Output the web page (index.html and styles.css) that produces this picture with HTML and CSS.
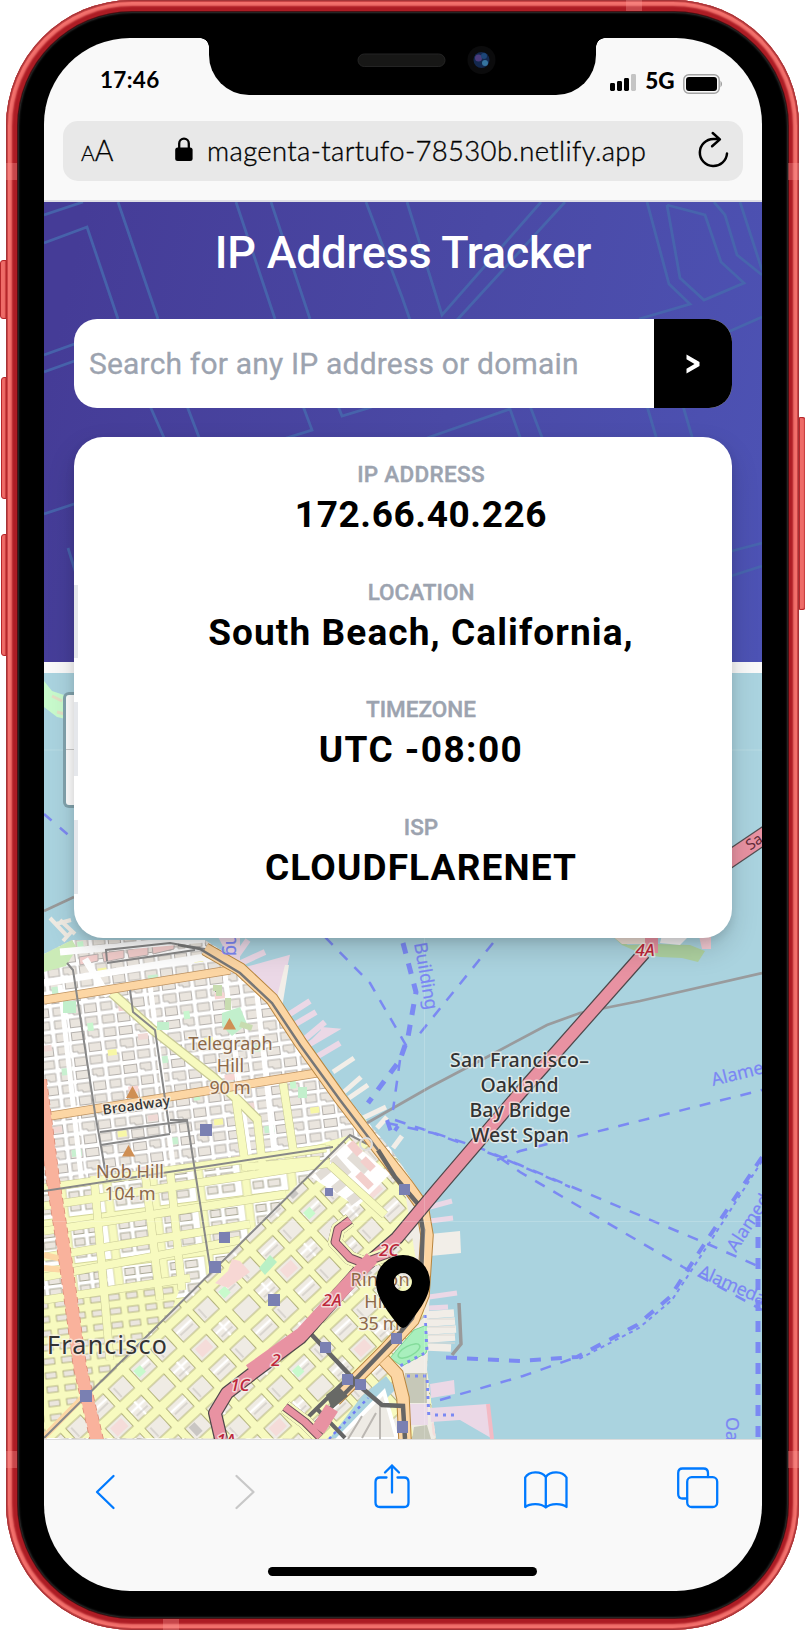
FILE: index.html
```html
<!DOCTYPE html>
<html lang="en">
<head>
<meta charset="utf-8">
<title>IP Address Tracker</title>
<link rel="stylesheet" href="styles.css">
</head>
<body>
<div class="phone">
  <i class="key mute"></i><i class="key vol-up"></i><i class="key vol-down"></i><i class="key power"></i>
  <i class="band band-t"></i><i class="band band-b"></i><i class="band band-l1"></i><i class="band band-l2"></i><i class="band band-r1"></i><i class="band band-r2"></i>
  <div class="bezel">
    <div class="screen">
      <div class="status">
        <span class="time">17:46</span>
        <span class="signal">
          <svg width="26" height="17" viewBox="0 0 26 17"><rect x="0" y="9" width="5" height="8" rx="1.4"/><rect x="7" y="7" width="5" height="10" rx="1.4"/><rect x="14" y="4" width="5" height="13" rx="1.4"/><rect x="21" y="0" width="5" height="17" rx="1.4" fill="#c4c4c4"/></svg>
          <b>5G</b>
          <svg class="battery" width="40" height="20" viewBox="0 0 40 20"><rect x=".8" y=".8" width="35.4" height="18.4" rx="5" fill="none" stroke="#a3a3a3" stroke-width="1.5"/><rect x="3" y="3" width="31" height="14" rx="3"/><path d="M37.5 6.5 Q40.5 10 37.5 13.5z" fill="#999"/></svg>
        </span>
        <div class="notch">
          <svg width="387" height="57" viewBox="209 38 387 57">
            <rect x="358" y="54" width="87" height="12.5" rx="6.2" fill="#171716" stroke="#242424"/>
            <circle cx="481.500" cy="60" r="14" fill="#0b0b0c"/><circle cx="481.500" cy="60" r="8" fill="#13284e"/>
            <circle cx="478.500" cy="58" r="3.500" fill="#4b3c7c"/><circle cx="485" cy="63" r="3" fill="#35749f"/><circle cx="484" cy="56" r="3" fill="#1d4678"/>
          </svg>
        </div>
      </div>
      <div class="address">
        <span class="aa"><small>A</small>A</span>
        <svg class="lock" width="18" height="25" viewBox="0 0 18 25"><path d="M4.200 12V6.500a4.800 4.800 0 0 1 9.600 0V12" fill="none" stroke="#000" stroke-width="2.300"/><rect x=".2" y="10.500" width="17.400" height="13.500" rx="2.500"/></svg>
        <span class="url">magenta-tartufo-78530b.netlify.app</span>
        <svg class="reload" width="32" height="38" viewBox="697 130 32 38" fill="none" stroke="#000" stroke-width="2.500" stroke-linecap="round" stroke-linejoin="round"><path d="M727 152.500a13.600 13.600 0 1 1-13.600-14.600h5.500M712.700 132l7.200 6.400-7.800 6.900"/></svg>
      </div>
      <div class="header">
        <svg class="lines" width="718" height="460" viewBox="44 202 718 460" fill="none" stroke="#4669ad" stroke-opacity=".85" stroke-width="2.800">
          <path d="M44 215 83 202M44 243 87 227 118 319M118 202 158 319M236 202 275 319M271 202 310 319M366 202 402 297 410 320M407 202 442 315 541 202M565 202 457 320M647 202 669 284 690 304 639 319M667 205 705 215 721 262 744 283 704 300 680 278 667 205M714 202 725 215 737 255 762 275M740 202 762 270M728 332 762 317M44 355 80 342M44 372 80 359M150 406 165 440M187 406 200 440M303 406 312 430 280 440M338 406 342 416 372 407M427 438 510 409 521 440M530 406 543 440M647 406 657 440M683 406 693 440M44 514 80 502M68 548 78 580M728 552 762 543M728 577 762 566"/>
        </svg>
        <h1>IP Address Tracker</h1>
        <div class="search"><span class="field">Search for any IP address or domain</span><span class="go"><svg width="14" height="20" viewBox="0 0 14 20"><path d="M.5.500 13.500 8v4L.5 19.500v-4.800L8.500 10 .5 5.300z" fill="#fff"/></svg></span></div>
        <div class="card">
          <div class="row first"><small class="wide">IP ADDRESS</small><strong class="v1">172.66.40.226</strong></div>
          <div class="row"><small>LOCATION</small><strong class="v2">South Beach, California,</strong></div>
          <div class="row"><small>TIMEZONE</small><strong class="v3">UTC -08:00</strong></div>
          <div class="row"><small>ISP</small><strong class="v4">CLOUDFLARENET</strong></div>
        </div>
      </div>
      <div class="map">
        <svg width="718" height="766" viewBox="44 673 718 766">
          <defs>
            <pattern id="north" width="48" height="39" patternUnits="userSpaceOnUse" patternTransform="translate(44 955) rotate(-7)">
              <rect width="48" height="39" fill="#fff"/>
              <g fill="#eae5de" stroke="#b5b1ad" stroke-width="1"><rect x="2" y="2" width="12" height="8.500"/><rect x="17.500" y="2.500" width="13" height="8"/><path d="M34 2h11v8h-7v-2h-4z"/><rect x="2" y="15" width="11" height="8"/><path d="M17 15h13v9h-8v-2h-5z"/><rect x="33.500" y="15" width="12" height="8.500"/><path d="M2 28h12v8H2z"/><rect x="17.500" y="28" width="12" height="8.500"/><rect x="33" y="28" width="12" height="8"/></g>
            </pattern>
            <pattern id="south" width="46" height="47" patternUnits="userSpaceOnUse" patternTransform="translate(54 1170) rotate(-7)">
              <rect width="46" height="47" fill="#fff"/>
              <path d="M0 5.500H46M5 0V47" stroke="#c9cb8d" stroke-width="9"/><path d="M0 5.500H46M5 0V47" stroke="#f7fabf" stroke-width="7.500"/>
              <g fill="#ebe6df" stroke="#aaa896" stroke-width="1"><rect x="12" y="12.500" width="10" height="7"/><rect x="27" y="12.500" width="12" height="7"/><rect x="12" y="24" width="10" height="7"/><rect x="27" y="24" width="12" height="7"/><rect x="12" y="36" width="10" height="7"/><rect x="27" y="36" width="12" height="7"/></g>
            </pattern>
            <pattern id="west" width="18" height="14" patternUnits="userSpaceOnUse" patternTransform="translate(50 1298) rotate(-7)">
              <rect width="18" height="14" fill="#f7fabf"/><rect x="4" y="4" width="11" height="6" fill="#ebe6df" stroke="#aead7c" stroke-width=".9"/>
            </pattern>
            <pattern id="soma" width="58" height="54" patternUnits="userSpaceOnUse" patternTransform="translate(250 1250) rotate(-43)">
              <rect width="58" height="54" fill="#f7fabf"/>
              <g fill="#efebe4" stroke="#b3b37c"><rect x="4.500" y="5" width="22" height="17"/><rect x="33.500" y="5" width="20" height="17"/><rect x="4.500" y="32" width="22" height="17"/><rect x="33.500" y="32" width="20" height="17"/></g>
              <path d="M5 11H26M44 32V49M34 38H53" stroke="#fff" stroke-width="2.500"/>
              <path d="M7 15H24M36 44H51M38 8V20" stroke="#c4bfbb" stroke-width="1"/>
            </pattern>
            <pattern id="accentN" width="97" height="82" patternUnits="userSpaceOnUse" patternTransform="translate(44 960) rotate(-7)">
              <rect x="4" y="28" width="10" height="7" fill="#c8f0d0"/><rect x="52" y="15" width="9" height="6" fill="#f7f7a6"/><rect x="68" y="54" width="10" height="6" fill="#f6d5d2"/><rect x="35" y="68" width="6" height="8" fill="#c8f7cf"/><rect x="84" y="3" width="10" height="6" fill="#f0d9d5"/>
            </pattern>
            <pattern id="accentS" width="116" height="108" patternUnits="userSpaceOnUse" patternTransform="translate(250 1250) rotate(-43)">
              <rect x="8" y="35" width="15" height="11" fill="#f5dcd9"/><rect x="64" y="9" width="9" height="9" fill="#c8facc"/><rect x="36" y="88" width="8" height="8" fill="#f6f8a4"/><rect x="66" y="88" width="8" height="12" fill="#c9c6c3"/>
            </pattern>
            <clipPath id="coast"><path d="M44 954 72 940 205 940 240 962 276 994 303 1036 345 1095 393 1152 420 1193 432 1235 428 1330 427 1370 436 1440H44z"/></clipPath>
          </defs>
          <rect x="44" y="673" width="718" height="766" fill="#aad3df"/>
          <path d="M44 681 52 691 70 697 75 705 70 720 57 717 44 707z" fill="#c8facc"/><path d="M52 696 62 701M57 712 72 716" stroke="#e3dfc5" stroke-width="3"/>
          <path d="M44 814 80 845" stroke="#7d88f2" stroke-width="2.500" stroke-dasharray="10 11" fill="none"/>
          <path d="M44 911 74 897" stroke="#999" stroke-width="2.500"/>
          <path d="M50 918 68 937M60 920 75 934M56 924 71 920 M63 941 73 930" stroke="#f0ebe3" stroke-width="4"/>
          <!-- piers -->
          <g stroke="#ebd8e6" stroke-width="6" fill="#ebd8e6"><path d="M228 969 265 952M231 964 248 940M246 970 286 959 277 1000 256 984M285 1017 310 1001M294 1025 316 1012M300 1043 325 1022M303 1048 332 1031 321 1030M318 1056 340 1043"/><path d="M222 938h15v28z"/></g>
          <path d="M275 1005 285 965 289 965 282 1008z" fill="#f2eee8"/>
          <path d="M333 1072 354 1058M344 1092 361 1077M349 1098 368 1085M363 1118 386 1107 M377 1128 387 1117M393 1148 402 1136" stroke="#f2eee8" stroke-width="5"/>
          <g clip-path="url(#coast)">
            <rect x="44" y="930" width="400" height="510" fill="url(#north)"/><rect x="44" y="930" width="400" height="250" fill="url(#accentN)"/>
            <path d="M44 950 72 940 77 948 66 966 44 972z" fill="#cbebb7"/>
            <path d="M79 957 98 954V961L80 965zM102 953 124 950V958L104 962zM127 950 148 946V955L129 958zM152 946 174 943V949L153 954z" fill="#f4cfcd" stroke="#b8b0ae"/>
            <path d="M44 983 205 957M85 959 108 996M60 952 205 939" stroke="#fff" stroke-width="7" fill="none"/>
            <path d="M60 985 110 1439M150 985 175 1180M225 975 250 1160M257 995 275 1160" stroke="#fff" stroke-width="5"/>
            <path d="M53 1184 300 1150 350 1135 300 1182 44 1438V1190z" fill="url(#south)"/>
            <path d="M44 1300 185 1276 170 1314 44 1438z" fill="url(#west)"/>
            <path d="M44 1438 303 1180 350 1135 400 1160 440 1225V1439z" fill="url(#soma)"/><path d="M44 1438 350 1135 440 1200V1439z" fill="url(#accentS)"/>
            <!-- white block strips beside Market Street -->
            <path d="M311 1177 350 1140 390 1174 357 1207z" fill="#fff"/><path d="M318 1177 329 1168M334 1190 345 1181M349 1202 361 1193M333 1158 348 1175M350 1155 367 1171" stroke="#e2ddd6" stroke-width="9"/>
            <path d="M350 1143 360 1154M363 1159 373 1169M358 1174 371 1187" stroke="#f3cfcc" stroke-width="8"/>
            <path d="M215 1283 228 1271 232 1259 240 1261 250 1272 228 1288z" fill="#f7d7d4"/><path d="M259 1268 270 1255 277 1262 265 1275z" fill="#b9f0c5"/>
            <g fill="none"><path d="M44 1206 330 1163M44 1188 326 1148M44 1231 286 1194M44 1257 250 1224M44 1277 240 1240M44 1300 190 1278M94 1176 110 1360M145 1172 160 1300M170 1170 182 1290M236 1100 246 1170M257 1117 263 1170M283 1083 294 1155M247 1167 320 1160 M330 1165 385 1215" stroke="#c8c996" stroke-width="8.500"/><path d="M112 993 153 1030 213 1077 238 1100 258 1120" stroke="#c8c996" stroke-width="10"/>
            <path d="M44 1206 330 1163M44 1188 326 1148M44 1231 286 1194M44 1257 250 1224M44 1277 240 1240M44 1300 190 1278M94 1176 110 1360M145 1172 160 1300M170 1170 182 1290M236 1100 246 1170M257 1117 263 1170M283 1083 294 1155M247 1167 320 1160 M330 1165 385 1215M112 993 153 1030 213 1077 238 1100 258 1120" stroke="#f7fabf" stroke-width="7.500"/></g>
            <path d="M222 1013 240 1007 247 1024 232 1036 222 1026z" fill="#c2efcc"/><path d="M213 988h6v8M228 998v12M240 1024 252 1028" stroke="#c8dcb0" stroke-width="6"/><rect x="63" y="1001" width="13" height="12" fill="#c2efcc"/><rect x="157" y="1022" width="12" height="8" fill="#c2efcc"/><rect x="298" y="1087" width="9" height="11" fill="#c2efcc"/>
            <path d="M44 1000 230 970M44 1117 317 1073" stroke="#be9362" stroke-width="9"/><path d="M44 1000 230 970M44 1117 317 1073" stroke="#fcd6a4" stroke-width="7.500"/><path d="M44 1255 66 1260M44 1268 65 1270M44 1437 90 1390" stroke="#fcd6a4" stroke-width="6"/>
            <path d="M40 1080 53 1180 65 1257 80 1367 98 1445" stroke="#d98a75" stroke-width="14" fill="none" stroke-dasharray="6 4"/><path d="M40 1080 53 1180 65 1257 80 1367 98 1445" stroke="#f9b29c" stroke-width="12.500" fill="none"/>
            <path d="M400 1160 437 1200 430 1330 427 1370 433 1439H415L404 1400 392 1370 425 1318z" fill="#f0ece5"/>
            <path d="M405 1373H427V1403H405z" fill="#c6c8b8"/><path d="M410 1404H428V1425H409z" fill="#ebdbe8"/><path d="M414 1427 427 1425 431 1439H412z" fill="#c6c8b8"/>
            <path d="M414 1330 427 1325 429 1343 426 1353 402 1366 390 1358z" fill="#a8efbd" stroke="#7dd694"/><ellipse cx="409" cy="1351" rx="12" ry="5" fill="none" stroke="#84dc9b" stroke-width="1.500" transform="rotate(-28 409 1351)"/>
            <path d="M362 1396 386 1376 396 1389 360 1425 348 1439 330 1438z" fill="#aad3df"/><path d="M329 1439 368 1398" stroke="#6e7cf5" stroke-width="2.500" stroke-dasharray="3 4"/>
            <path d="M338 1439 384 1392 397 1439z" fill="#eeebe5" stroke="#fff" stroke-width="4"/><path d="M348 1439 362 1416M362 1438 376 1413M380 1440V1405" stroke="#bbb7b2" stroke-width="2"/>
          </g>
          <!-- east shore piers -->
          <path d="M430 1207 452 1201M430 1221 453 1218M429 1297 457 1293M429 1308 448 1307" stroke="#ebd8e6" stroke-width="5"/><path d="M430 1234 460 1231 461 1253 430 1256z" fill="#f2eee8"/>
          <path d="M427 1315 454 1313M427 1323 455 1321M427 1331 456 1329M428 1339 455 1337M428 1347 451 1348" stroke="#f1ede7" stroke-width="7.500"/><path d="M427 1319H455M428 1327H455M428 1335H455M428 1343H455" stroke="#dedad4"/>
          <path d="M459 1303 461 1344 452 1355" fill="none" stroke="#999" stroke-width="3.500"/><path d="M430 1384 454 1380 455 1394 431 1398zM430 1408 488 1404 491 1438 460 1420 431 1422z" fill="#ebd8e6"/><path d="M488 1404 492 1439" stroke="#f3bac4" stroke-width="4"/>
          <!-- rail and tram lines -->
          <path d="M67 963 73 970 95 1113 107 1180M130 990 133 1012 155 1030 170 1133M170 1120 187 1120 210 1267M100 1132 187 1121M101 1145 170 1134M44 1191 333 1147 M44 1438 350 1135 367 1144M107 961 106 950 170 943 205 949M107 963 195 950" stroke="#888" stroke-width="2" fill="none"/>
          <path d="M205 949 240 969 272 999 300 1042 340 1098 378 1148 407 1185 422 1206 427 1235 423 1295 413 1320 385 1350 335 1400 M384 1360 397 1374 403 1398 405 1440" fill="none" stroke="#b8853e" stroke-width="13.500"/>
          <path d="M205 949 240 969 272 999 300 1042 340 1098 378 1148 407 1185 422 1206 427 1235 423 1295 413 1320 385 1350 335 1400 M384 1360 397 1374 403 1398 405 1440" fill="none" stroke="#fcd6a4" stroke-width="11.500"/>
          <path d="M178 945 200 949 240 973 272 1003 300 1045 340 1100 378 1150" fill="none" stroke="#777" stroke-width="2.500"/><path d="M378 1150 395 1177 418 1204 423 1230 420 1295 412 1318 397 1336 354 1381M311 1334 362 1388 382 1405 403 1406 405 1439" fill="none" stroke="#666" stroke-width="4.500"/><circle cx="366" cy="1144" r="6" fill="none" stroke="#ddd" stroke-width="2"/>
          <path d="M305 1420 350 1376M312 1427 356 1382M318 1410 345 1438" stroke="#666" stroke-width="4" fill="none"/><path d="M326 1395 338 1386 348 1396 332 1409z" fill="#686966"/>
          <path d="M367 1123 430 1087 487 1057 547 1025 580 1013 640 1001 762 973" fill="none" stroke="#999b9d" stroke-width="2.700"/>
          <!-- ferry routes -->
          <g fill="none" stroke="#7b89f3" stroke-width="2.500" stroke-dasharray="11 10">
            <path d="M325 937 370 983 407 1047M493 943 417 1037M387 1123 433 1133 500 1157 570 1187M395 1120 480 1148 520 1165 710 1245 762 1268M500 1158 520 1172 683 1267 762 1310M497 1160 520 1151 762 1090M440 1400 523 1376 577 1357M400 1060 393 1110"/>
            <path d="M403 943 416 992 408 1037 400 1060 368 1103" stroke-width="5"/><path d="M762 1157 707 1240 670 1297 637 1325 577 1357 520 1361 437 1357" stroke-width="4"/><path d="M762 1161 710 1242 672 1300 639 1328 579 1359" stroke-width="2" stroke-dasharray="4 4"/><path d="M758 1216V1439" stroke-width="5"/><path d="M425 1315 427 1352 400 1366M407 1376H427L429 1420M435 1415H455" stroke-width="3" stroke-dasharray="3 5"/><path d="M387 1120 392 1135 398 1126" stroke-width="4"/>
          </g>
          <!-- motorways -->
          <path d="M611 935 628 945 657 944 690 945 705 951 698 962 682 958 660 957 640 953 622 945z" fill="#aed1a0"/><path d="M611 935H651L648 944 622 944z" fill="#eadbd2"/><path d="M662 935H690L680 945 660 943z" fill="#f1eff0"/><path d="M699 936H711V949H702z" fill="#f2c9d1"/><path d="M645 936H658V953H645z" fill="#e892a2"/>
          <g fill="none" stroke-linejoin="round"><path d="M726 861.500 768 833" stroke="#544e52" stroke-width="18"/><path d="M726 861.500 768 833" stroke="#e892a2" stroke-width="15.500"/>
          <path d="M644 953 520 1093 437 1190 397 1238 360 1270 300 1338 253 1373 227 1393 215 1413 222 1443M350 1220 338 1229 335 1242 350 1258 363 1263 393 1252M285 1407 305 1422 320 1437" stroke="#4f484b" stroke-width="14"/><path d="M644 953 520 1093 437 1190 397 1238 360 1270 300 1338 253 1373 227 1393 215 1413 222 1443" stroke="#e892a2" stroke-width="11.500"/><path d="M350 1220 338 1229 335 1242 350 1258 363 1263 393 1252M285 1407 305 1422 320 1437" stroke="#f7fabf" stroke-width="14"/><path d="M350 1220 338 1229 335 1242 350 1258 363 1263 393 1252M285 1407 305 1422 320 1437" stroke="#6c4f57" stroke-width="9"/><path d="M350 1220 338 1229 335 1242 350 1258 363 1263 393 1252M285 1407 305 1422 320 1437" stroke="#e892a2" stroke-width="7"/><path d="M372 1258 302 1334 250 1371" stroke="#e892a2" stroke-width="14"/><path d="M318 1430 332 1408" stroke="#e892a2" stroke-width="14"/></g>
          <g fill="#7a80b2"><path d="M200 1124h12v12h-12zM219 1232h11v11h-11zM209 1261h12v12h-12zM268 1294h12v12h-12zM80 1390h12v12H80zM399 1184h11v11h-11zM325 1188h8v8h-8zM320 1342h11v11h-11zM342 1374h11v11h-11zM355 1379h11v11h-11zM391 1333h11v11h-11zM397 1421h11v12h-11z"/></g>
          <path d="M44 750H762M44 1221.500H762M424.500 935V1439" stroke="#fff" stroke-opacity=".18"/>
          <g fill="#cf8f54"><path d="M223 1029.500 229.500 1018 236 1029.500zM126 1098 132.500 1086 139 1098zM122 1156.500 128.500 1145 135 1156.500z"/></g>
          <g class="labels" text-anchor="middle">
            <g class="hill"><text x="230.500" y="1050" textLength="84">Telegraph</text><text x="230.500" y="1071.500">Hill</text><text x="230" y="1093.500" textLength="41">90 m</text><text x="130" y="1178" textLength="68">Nob Hill</text><text x="130" y="1200" textLength="51">104 m</text><text x="380" y="1286" textLength="59">Rincon</text><text x="378" y="1308">Hill</text><text x="379" y="1329.500" textLength="41">35 m</text></g>
            <text class="road" transform="translate(137 1110) rotate(-8)" textLength="68">Broadway</text>
            <g class="bridge"><text x="519.500" y="1067" textLength="139">San Francisco–</text><text x="519.500" y="1092" textLength="78">Oakland</text><text x="520" y="1116.500" textLength="101">Bay Bridge</text><text x="520" y="1141.500" textLength="98">West Span</text></g>
            <text class="city" x="107" y="1354" textLength="120">Francisco</text>
            <g class="ref"><text x="645" y="956">4A</text><text x="389" y="1256">2C</text><text x="332" y="1306">2A</text><text x="276" y="1366">2</text><text x="240" y="1391">1C</text><text x="226" y="1446">1A</text></g>
            <g class="sea"><text transform="translate(420 977) rotate(80)" textLength="68">Building</text><text transform="translate(226 945) rotate(90)">ng</text><g text-anchor="start"><text transform="translate(713 1086) rotate(-14)">Alameda</text><text transform="translate(736 1253) rotate(-57)">Alameda</text><text transform="translate(697 1276) rotate(24)" textLength="72">Alameda</text><text transform="translate(726 1417) rotate(90)">Oakland</text></g></g>
            <text class="sail" transform="translate(757 846) rotate(-35)">Sa</text>
          </g>
          <path d="M403 1255A27 27 0 0 0 376 1282C376 1299 391 1315 398 1325Q403 1331 408 1325C415 1315 430 1299 430 1282A27 27 0 0 0 403 1255zM403 1273a9 9 0 1 1-.1 0z" fill-rule="evenodd"/>
          <g class="zoom"><rect x="63" y="692" width="60" height="116" rx="6" fill="#82a3ad"/><rect x="66" y="695" width="54" height="110" rx="3" fill="#fff"/><path d="M66 749.500H120" stroke="#ccc"/></g>
        </svg>
      </div>
      <div class="toolbar">
        <svg class="i-back" width="22" height="36" viewBox="94 1473.500 22 36"><path d="M113.500 1475.500 97 1491.500 113.500 1507.500"/></svg>
        <svg class="i-next" width="22" height="36" viewBox="234 1473.500 22 36"><path d="M236.500 1475.500 253.500 1491.500 236.500 1507.500"/></svg>
        <svg class="i-share" width="36" height="46" viewBox="374 1463 36 46"><path d="M386.500 1477.500H380Q375.500 1477.500 375.500 1482V1502.500Q375.500 1507 380 1507H404Q408.500 1507 408.500 1502.500V1482Q408.500 1477.500 404 1477.500H397.500M392 1492.500V1465.500M385 1472.500 392 1465.500 399 1472.500"/></svg>
        <svg class="i-book" width="44" height="40" viewBox="524 1470 44 40"><path d="M545.800 1477C541 1470.500 529 1471 525.200 1477.500V1507C530 1503 541 1503 545.800 1507.500 550.500 1503 562 1503 566.500 1507V1477.500C562.500 1471 550.500 1470.500 545.800 1477V1507"/></svg>
        <svg class="i-tabs" width="42" height="42" viewBox="677 1467 42 42"><rect x="687.200" y="1477.200" width="30" height="29.800" rx="4.500"/><path d="M687 1498.500H682.500Q678.200 1498.500 678.200 1494V1473Q678.200 1468.500 682.500 1468.500H703.500Q708 1468.500 708 1473V1477"/></svg>
      </div>
      <div class="home"></div>
    </div>
  </div>
</div>
</body>
</html>
```
FILE: styles.css
```css
*{box-sizing:border-box}
body{margin:0;background:#fff;width:805px;height:1630px;overflow:hidden}
svg{display:block;flex:none}
.phone{position:relative;width:793px;height:1630px;margin:0 6px;padding:12px 11.5px;border-radius:126px;background:#ac1c24;box-shadow:inset 0 0 0 1px #a33437,inset 0 0 0 2px #c94546,inset 0 0 2px 6px #f2706c}
.bezel{height:1606px;padding:26px 26.5px 27px;background:#000;border-radius:114px;box-shadow:0 0 0 1px #4b1013,inset 0 0 2px 1px #333}
.screen{position:relative;display:flex;flex-direction:column;width:717.5px;height:1553px;background:#f9f9f9;border-radius:86px;overflow:hidden}
.key{position:absolute;width:7px;background:#ee6c68;border:1px solid #b6262a;border-radius:3px 0 0 3px;box-shadow:inset -1px 0 1px #c73d3e}
.mute{left:-6px;top:260px;height:59px}
.vol-up{left:-5px;width:6px;top:377px;height:122px}
.vol-down{left:-5px;width:6px;top:534px;height:122px}
.power{right:-7px;top:417px;height:193px;border-radius:0 3px 3px 0}
.band{position:absolute;background:rgba(255,160,155,.32)}
.band-t{left:620px;top:0;width:16px;height:11px}
.band-b{left:157px;bottom:0;width:16px;height:11px}
.band-l1,.band-l2{left:0;width:11px;height:17px}
.band-r1,.band-r2{right:0;width:11px;height:17px}
.band-l1,.band-r1{top:163px}
.band-l2,.band-r2{top:1451px}

.status{position:relative;flex:none;height:83px;display:flex;justify-content:space-between;padding:0 38px 0 56px;font-family:Lato,sans-serif;font-weight:700;color:#000}
.time{font-size:22.500px;line-height:27px;margin-top:28px;letter-spacing:.3px}
.signal{display:flex;align-items:flex-start;padding-top:36px}
.signal b{font-size:22.500px;line-height:27px;margin:-7px 8px 0 9px}
.signal .battery{margin-right:1px}
.notch{position:absolute;left:165px;top:0;width:387px;height:57px;background:#000;border-radius:0 0 40px 40px}
.notch:before,.notch:after{content:"";position:absolute;top:0;width:9px;height:9px}
.notch:before{left:-9px;background:radial-gradient(circle at 0 100%,transparent 8.500px,#000 9px)}
.notch:after{right:-9px;background:radial-gradient(circle at 100% 100%,transparent 8.500px,#000 9px)}
.address{flex:none;display:flex;align-items:center;width:680px;height:60px;margin:0 0 19px 19px;padding:0 14px 0 18px;border-radius:15px;background:#e8e8e8;font-family:Lato,sans-serif;color:#000}
.aa{width:94px;font-size:28.500px;line-height:32px;font-weight:300;-webkit-text-stroke:.3px #000}
.aa small{font-size:21px}
.lock{margin-top:-3px}
.url{width:440px;margin-left:14px;margin-top:-1px;font-size:27.500px;line-height:34px;font-weight:300;-webkit-text-stroke:.35px #000;white-space:nowrap;letter-spacing:.35px}
.reload{margin-left:auto;margin-top:-2px}

.header{position:relative;z-index:2;flex:none;height:462px;padding:0 29.5px 0 30px;border-top:2px solid #dedee5;background:linear-gradient(102deg,#453c97 5%,#4a49a5 55%,#4d53b5)}
.header,.card{font-family:Roboto,sans-serif}
.lines{position:absolute;left:0;top:0}
h1{position:relative;margin:0;padding-top:24px;height:117px;text-align:center;font-size:45px;line-height:53px;font-weight:500;letter-spacing:-.25px;color:#fff}
.search{position:relative;display:flex;height:89px;border-radius:23px;overflow:hidden;background:#fff}
.field{width:580px;padding-left:15px;font-size:30px;line-height:90px;letter-spacing:.18px;color:#9ca3af;-webkit-text-stroke:.3px #9ca3af;white-space:nowrap}
.go{display:flex;flex:1;align-items:center;justify-content:center;background:#000}
.card{position:relative;height:501px;margin-top:29px;padding-top:30px;border-radius:29px;background:#fff;box-shadow:0 12px 28px rgba(0,0,0,.15),0 4px 9px rgba(0,0,0,.1)}
.row{display:flex;flex-direction:column;align-items:center;height:73.700px;margin-bottom:44px;padding-left:32px;border-left:4px solid #e5e7eb;white-space:nowrap}
.row.first{border-color:transparent}
.row small{height:24px;margin-top:-6px;font-size:22.500px;line-height:27px;font-weight:500;color:#9ca3af;-webkit-text-stroke:.4px #9ca3af}
.row .wide{letter-spacing:.3px}
.row strong{font-size:37px;line-height:59px;font-weight:700;color:#000}
.v1{letter-spacing:.6px}
.v2{letter-spacing:1.100px}
.v3{letter-spacing:1.450px}
.v4{letter-spacing:1.150px}
.map{flex:none;height:766px;margin-top:11px}
.labels{font-family:"Noto Sans",sans-serif}
.labels text{paint-order:stroke;stroke:#f7f5f0;stroke-opacity:.7;stroke-width:3px;stroke-linejoin:round}
.labels .hill{font-size:18px;fill:#8c6849}
.labels .road{font-size:14px;font-weight:500;fill:#333}
.labels .bridge{font-size:19.500px;font-weight:500;fill:#333}
.labels .city{font-size:25px;fill:#333}
.labels .ref{font-size:17px;font-style:italic;font-weight:500;fill:#bd263a}
.labels .sea text{font-size:18px;fill:#7b86f4;stroke:#7b86f4;stroke-width:.3px}
.labels .sail{font-size:15px;fill:#622b39;stroke:none}

.toolbar{flex:none;height:128px;display:flex;align-items:flex-start;border-top:1px solid #dcdcdc}
.toolbar svg{fill:none;stroke:#007aff;stroke-width:2.300;stroke-linecap:round;stroke-linejoin:round}
.i-back{margin:34px 0 0 50px}
.toolbar .i-next{margin:34px 0 0 118px;stroke:#c8c8c8}
.i-share{margin:23px 0 0 118px}
.i-book{margin:30px 0 0 114px}
.i-tabs{margin:27px 0 0 109px}
.home{flex:none;width:269px;height:9px;margin-left:224px;border-radius:5px;background:#000}
```
